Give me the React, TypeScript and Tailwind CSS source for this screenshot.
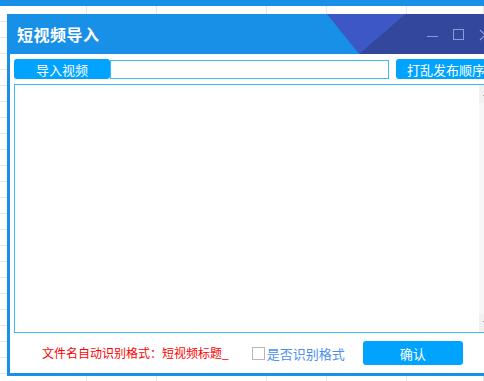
import React from 'react';

const cols = [87, 70, 110, 60, 80, 77];
const rows = Array.from({ length: 24 });

function SheetBackground() {
  return (
    <div className="flex flex-col">
      <div className="h-[6px] bg-[#1890e8]" />
      {rows.map((_, r) => (
        <div key={r} className="flex h-[16px] shrink-0">
          {cols.map((w, c) => (
            <div key={c} style={{ width: w }} className="h-full shrink-0 border-r border-b border-[#e6e6e6]" />
          ))}
        </div>
      ))}
    </div>
  );
}

function TitleBar() {
  return (
    <div className="relative h-[40px] bg-[#1890e8] flex items-center pl-[7px]">
      <svg className="absolute left-0 top-0" width="480" height="40" viewBox="0 0 480 40">
        <polygon points="317,0 395,0 349,40" fill="#3e57c6" />
        <polygon points="395,0 480,0 480,40 349,40" fill="#33479c" />
      </svg>
      <span className="relative text-[16px] font-bold text-white tracking-[0.5px]">短视频导入</span>
      <div className="absolute left-[417px] top-0 h-full flex items-center gap-[15px]">
        <div className="w-[11px] h-[1px] bg-[#8c9bd8] mt-[4px]" />
        <div className="w-[11px] h-[11px] border border-[#8c9bd8] mt-[1px]" />
        <svg width="12" height="12" viewBox="0 0 12 12" className="mt-[1px]">
          <path d="M1 1 L11 11 M11 1 L1 11" stroke="#8c9bd8" strokeWidth="1.2" fill="none" />
        </svg>
      </div>
    </div>
  );
}

function ScrollArrow({ up }: { up?: boolean }) {
  return (
    <div className="h-[18px] bg-[#f0f0f0] flex items-center pl-[4px]">
      <svg width="7" height="4" viewBox="0 0 7 4">
        <polygon points={up ? '0,4 3.5,0 7,4' : '0,0 3.5,4 7,0'} fill="#606060" />
      </svg>
    </div>
  );
}

export default function App() {
  return (
    <div className="relative w-[484px] h-[381px] overflow-hidden bg-white font-['Microsoft_YaHei','Noto_Sans_CJK_SC',sans-serif]">
      <SheetBackground />
      <div className="absolute left-[7px] top-[14px] w-[520px] h-[362px] bg-white border-l-[3px] border-b-[3px] border-[#1890e8] flex flex-col">
        <TitleBar />

        <div className="flex items-center pl-[4px] mt-[5px] h-[20px]">
          <button className="w-[96px] h-[20px] rounded-[3px] bg-[#00a4ff] text-white text-[13px] leading-none flex items-center justify-center">
            导入视频
          </button>
          <div className="w-[279px] h-[19px] border border-[#3dbbf5] bg-white" />
          <button className="ml-[7px] w-[96px] h-[20px] rounded-[3px] bg-[#00a4ff] text-white text-[13px] leading-none flex items-center pl-[11px]">
            打乱发布顺序
          </button>
        </div>

        <div className="ml-[4px] mt-[5px] w-[483px] h-[249px] border border-[#3dbbf5] bg-white flex justify-end">
          <div className="w-[17px] h-full bg-[#f7f7f7] flex flex-col justify-between">
            <ScrollArrow up />
            <ScrollArrow />
          </div>
        </div>

        <div className="flex-1 flex items-center">
          <span className="ml-[32px] text-[12px] text-[#ff0000] leading-none">文件名自动识别格式：短视频标题_</span>
          <label className="ml-[23px] flex items-center">
            <span className="w-[13px] h-[13px] border border-[#b8b8b8] bg-white" />
            <span className="ml-[2px] text-[13px] text-[#4a8ef0] leading-none">是否识别格式</span>
          </label>
          <button className="ml-[18px] w-[100px] h-[24px] rounded-[3px] bg-[#00a4ff] text-white text-[13px] leading-none flex items-center justify-center">
            确认
          </button>
        </div>
      </div>
    </div>
  );
}
